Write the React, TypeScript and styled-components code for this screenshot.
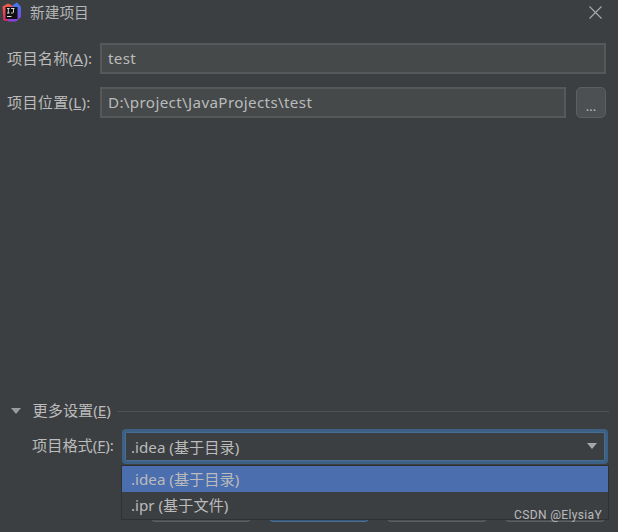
import React from "react";
import styled, { createGlobalStyle } from "styled-components";

const Global = createGlobalStyle`
  html, body { margin: 0; padding: 0; background: #3c3f41; }
  body { font-family: "Noto Sans", "Noto Sans CJK SC", sans-serif; }
`;

const Dialog = styled.div`
  position: relative;
  width: 618px;
  height: 532px;
  overflow: hidden;
  background: #3c3f41;
  color: #bbbbbb;
  font-size: 15.2px;
  display: flex;
  flex-direction: column;
`;

const TitleBar = styled.header`
  height: 28px;
  padding: 0 16px 4px 2px;
  box-sizing: border-box;
  display: flex;
  align-items: center;
  gap: 6px;
`;

const TitleText = styled.span`
  flex: 1;
  font-size: 14.7px;
  color: #b4b6b7;
  padding-bottom: 1px;
`;

const Form = styled.div`
  margin-top: 15px;
  padding: 0 12px 0 7px;
  display: flex;
  flex-direction: column;
  gap: 13px;
`;

const Row = styled.div`
  display: flex;
  align-items: center;
  height: 31px;
`;

const Label = styled.label`
  width: 93px;
  flex: none;
  white-space: nowrap;
  padding-bottom: 4px;
  letter-spacing: 0.2px;
`;

const Field = styled.div`
  flex: 1;
  height: 31px;
  box-sizing: border-box;
  padding: 0 6px 2px;
  display: flex;
  align-items: center;
  background: #45494a;
  border: 2px solid #565859;
  color: #bbbbbb;
  letter-spacing: 0.35px;
`;

const BrowseButton = styled.button`
  flex: none;
  width: 30px;
  height: 31px;
  margin-left: 10px;
  padding: 7px 0 0;
  box-sizing: border-box;
  background: #4c5052;
  border: 1px solid #5e6060;
  border-radius: 5px;
  color: #bbbbbb;
  font: 13px "Noto Sans", sans-serif;
`;

const Spacer = styled.div`
  flex: 1;
`;

const SectionHeader = styled.div`
  display: flex;
  align-items: center;
  height: 20px;
  padding: 0 9px 0 11px;
`;

const Triangle = styled.span<{ $color: string }>`
  flex: none;
  width: 0;
  height: 0;
  border-left: 5.5px solid transparent;
  border-right: 5.5px solid transparent;
  border-top: 6px solid ${(p) => p.$color};
`;

const SectionTitle = styled.span`
  margin-left: 11.5px;
  white-space: nowrap;
  padding-bottom: 4px;
`;

const SectionLine = styled.span`
  flex: 1;
  height: 1px;
  margin-left: 7px;
  background: #505354;
`;

const ComboRow = styled.div`
  position: relative;
  display: flex;
  align-items: center;
  height: 35px;
  margin-top: 8px;
  padding: 0 10px 0 32px;
`;

const ComboLabel = styled.label`
  width: 90px;
  flex: none;
  white-space: nowrap;
  padding-bottom: 6px;
`;

const Combo = styled.div`
  flex: 1;
  height: 35px;
  box-sizing: border-box;
  display: flex;
  align-items: center;
  justify-content: space-between;
  padding: 0 8px 2px 6px;
  border: 3px solid #3d6185;
  border-radius: 4px;
  box-shadow: inset 0 0 0 1px #466d94;
  background: #3c3f41;
`;

const Popup = styled.div`
  position: absolute;
  left: 121px;
  top: 36px;
  width: 488px;
  height: 55px;
  box-sizing: border-box;
  border: 1px solid #2f3132;
  background: #3c3f41;
  z-index: 2;
`;

const PopupItem = styled.div<{ $selected?: boolean }>`
  height: 26px;
  box-sizing: border-box;
  padding: 0 9px 3px;
  display: flex;
  align-items: center;
  background: ${(p) => (p.$selected ? "#4b6eaf" : "transparent")};
  color: #bbbbbb;
`;

const Footer = styled.footer`
  display: flex;
  justify-content: flex-end;
  gap: 18px;
  height: 31px;
  margin-top: 27px;
  margin-bottom: 10px;
  padding-right: 13px;
`;

const FooterButton = styled.div<{ $primary?: boolean }>`
  width: 100px;
  height: 31px;
  box-sizing: border-box;
  border-radius: 4px;
  background: ${(p) => (p.$primary ? "#365880" : "#4c5052")};
  border: 1px solid ${(p) => (p.$primary ? "#4c708c" : "#5e6060")};
`;

const Watermark = styled.div`
  position: absolute;
  right: 16px;
  bottom: 10px;
  z-index: 3;
  font: 12px Roboto, "Liberation Sans", sans-serif;
  letter-spacing: 0.35px;
  color: #b9bbbc;
`;

function Logo() {
  return (
    <svg width="22" height="24" viewBox="0 0 22 24" aria-hidden="true">
      <defs>
        <linearGradient id="lr" x1="0" y1="0" x2="0" y2="1">
          <stop offset="0" stopColor="#f2604a" />
          <stop offset="1" stopColor="#e02a6c" />
        </linearGradient>
        <linearGradient id="lb" x1="0" y1="0" x2="0" y2="1">
          <stop offset="0" stopColor="#3f7df0" />
          <stop offset="1" stopColor="#8a3fd8" />
        </linearGradient>
      </defs>
      <path d="M0.5 6.5 L6 3.5 L11 6 L8 21 L1.5 20.5 Z" fill="url(#lr)" />
      <path d="M11 5 L15 2.5 L19 7 L19 17 L14 21.5 L6 21.5 Z" fill="url(#lb)" />
      <rect x="3.5" y="7" width="12" height="12" fill="#111" />
      <path d="M5 8.5h2.6M6.3 8.5v4.5M5 13h2.6M9 8.5h3.5M11.5 8.5v3.6q0 .9-.9.9H9" stroke="#e8e8e8" strokeWidth="0.9" fill="none" />
      <rect x="5" y="16" width="4.5" height="1" fill="#ddd" />
    </svg>
  );
}

function CloseIcon() {
  return (
    <svg width="13" height="13" viewBox="0 0 13 13" aria-hidden="true">
      <path d="M0.5 0.5 L12.5 12.5 M12.5 0.5 L0.5 12.5" stroke="#a9abac" strokeWidth="1.1" />
    </svg>
  );
}

export default function App() {
  return (
    <Dialog>
      <Global />
      <TitleBar>
        <Logo />
        <TitleText>新建项目</TitleText>
        <CloseIcon />
      </TitleBar>
      <Form>
        <Row>
          <Label>项目名称(<u>A</u>):</Label>
          <Field>test</Field>
        </Row>
        <Row>
          <Label>项目位置(<u>L</u>):</Label>
          <Field>D:\project\JavaProjects\test</Field>
          <BrowseButton>...</BrowseButton>
        </Row>
      </Form>
      <Spacer />
      <SectionHeader>
        <Triangle $color="#9a9c9d" />
        <SectionTitle>更多设置(<u>E</u>)</SectionTitle>
        <SectionLine />
      </SectionHeader>
      <ComboRow>
        <ComboLabel>项目格式(<u>F</u>):</ComboLabel>
        <Combo>
          <span>.idea (基于目录)</span>
          <Triangle $color="#a5a7a8" />
        </Combo>
        <Popup>
          <PopupItem $selected>.idea (基于目录)</PopupItem>
          <PopupItem>.ipr (基于文件)</PopupItem>
        </Popup>
      </ComboRow>
      <Footer>
        <FooterButton />
        <FooterButton $primary />
        <FooterButton />
        <FooterButton />
      </Footer>
      <Watermark>CSDN @ElysiaY</Watermark>
    </Dialog>
  );
}
